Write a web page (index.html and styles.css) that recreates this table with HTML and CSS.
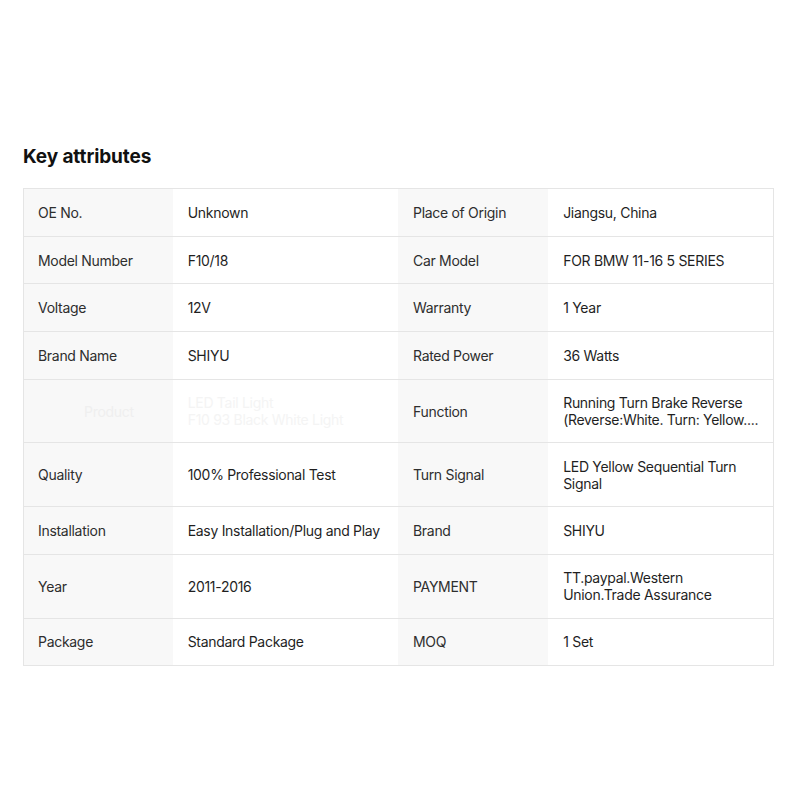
FILE: index.html
```html
<!DOCTYPE html>
<html>
<head>
<meta charset="utf-8">
<link rel="stylesheet" href="styles.css">
</head>
<body>
<div class="page">
  <h2 class="title">Key attributes</h2>
  <table class="attrs">
    <colgroup>
      <col class="c-label1"><col class="c-val1"><col class="c-label2"><col class="c-val2">
    </colgroup>
    <tr><th>OE No.</th><td>Unknown</td><th>Place of Origin</th><td>Jiangsu, China</td></tr>
    <tr><th>Model Number</th><td>F10/18</td><th>Car Model</th><td>FOR BMW 11-16 5 SERIES</td></tr>
    <tr><th>Voltage</th><td>12V</td><th>Warranty</th><td>1 Year</td></tr>
    <tr><th>Brand Name</th><td>SHIYU</td><th>Rated Power</th><td>36 Watts</td></tr>
    <tr class="tall"><th class="faded">Product</th><td class="faded">LED Tail Light<br>F10 93 Black White Light</td><th>Function</th><td>Running Turn Brake Reverse<br>(Reverse:White. Turn: Yellow....</td></tr>
    <tr class="tall"><th>Quality</th><td>100% Professional Test</td><th>Turn Signal</th><td>LED Yellow Sequential Turn<br>Signal</td></tr>
    <tr><th>Installation</th><td>Easy Installation/Plug and Play</td><th>Brand</th><td>SHIYU</td></tr>
    <tr class="tall"><th>Year</th><td>2011-2016</td><th>PAYMENT</th><td>TT.paypal.Western<br>Union.Trade Assurance</td></tr>
    <tr><th>Package</th><td>Standard Package</td><th>MOQ</th><td>1 Set</td></tr>
  </table>
</div>
</body>
</html>
```

FILE: styles.css
```css
html, body {
  margin: 0;
  padding: 0;
  background: #ffffff;
}
body {
  font-family: Inter, "Noto Sans", Arial, sans-serif;
  color: #222222;
}
.page {
  padding: 145px 0 0 23px;
}
.title {
  margin: 0 0 19px 0;
  font-size: 19px;
  line-height: 24px;
  font-weight: 700;
  color: #111111;
  letter-spacing: -0.1px;
}
.attrs {
  width: 751px;
  border-collapse: collapse;
  table-layout: fixed;
  border: 1px solid #e5e5e5;
  font-size: 14px;
  line-height: 17px;
  letter-spacing: -0.3px;
}
.c-label1 { width: 149px; }
.c-val1 { width: 225px; }
.c-label2 { width: 150px; }
.c-val2 { width: 225px; }
.attrs tr {
  border-bottom: 1px solid #e5e5e5;
  height: 47.7px;
}
.attrs tr.tall {
  height: 63.7px;
}
.attrs th,
.attrs td {
  padding: 0 12px 0 15px;
  text-align: left;
  vertical-align: middle;
  font-weight: 400;
  color: #1f1f1f;
}
.attrs th {
  background: #f8f8f8;
  color: #2e2e2e;
}
.attrs tr > th:first-child {
  padding-left: 14px;
}
.attrs td {
  background: #ffffff;
}
.attrs .faded {
  color: #f4f4f4;
}
.attrs tr > th.faded {
  color: #efefef;
  padding-left: 60px;
}
```
